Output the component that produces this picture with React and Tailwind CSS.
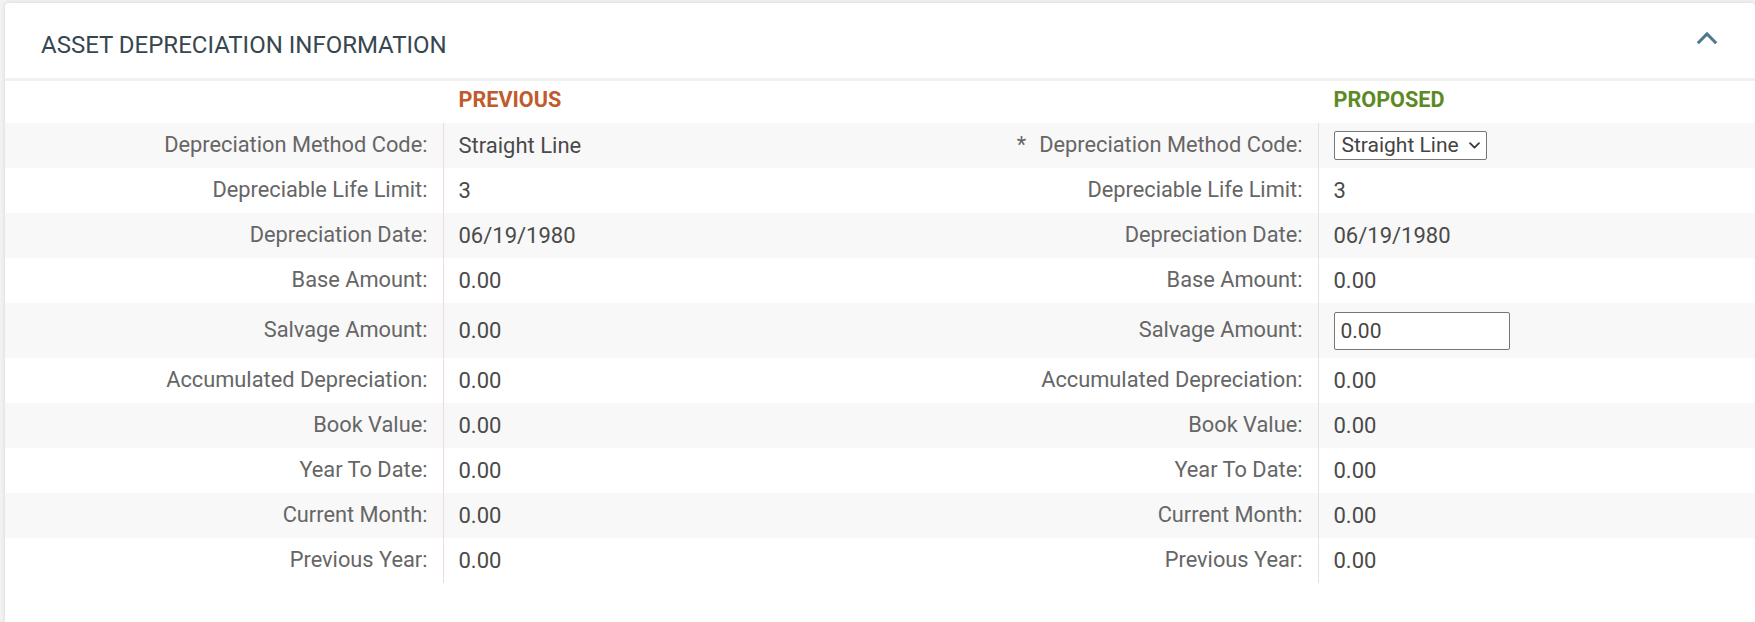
import React from "react";

const rows = [
  { label: "Depreciation Method Code:", prev: "Straight Line", kind: "select" },
  { label: "Depreciable Life Limit:", prev: "3", next: "3" },
  { label: "Depreciation Date:", prev: "06/19/1980", next: "06/19/1980" },
  { label: "Base Amount:", prev: "0.00", next: "0.00" },
  { label: "Salvage Amount:", prev: "0.00", kind: "input" },
  { label: "Accumulated Depreciation:", prev: "0.00", next: "0.00" },
  { label: "Book Value:", prev: "0.00", next: "0.00" },
  { label: "Year To Date:", prev: "0.00", next: "0.00" },
  { label: "Current Month:", prev: "0.00", next: "0.00" },
  { label: "Previous Year:", prev: "0.00", next: "0.00" },
];

function SelectBox() {
  return (
    <div className="relative inline-flex">
      <select
        defaultValue="Straight Line"
        className="appearance-none w-[153px] h-[29px] border border-[#767676] rounded-[2px] bg-white pl-[7px] pr-[24px] py-0 text-[21px] leading-[27px] text-[#444444] outline-none"
        style={{ fontFamily: "Roboto, 'Liberation Sans', sans-serif" }}
      >
        <option>Straight Line</option>
        <option>Declining Balance</option>
      </select>
      <svg
        className="pointer-events-none absolute right-[7px] top-[11px]"
        width="11"
        height="7"
        viewBox="0 0 11 7"
        fill="none"
      >
        <path d="M1 1.2 L5.5 5.7 L10 1.2" stroke="#3a3a3a" strokeWidth="1.7" strokeLinecap="round" strokeLinejoin="round" />
      </svg>
    </div>
  );
}

function InputBox() {
  return (
    <input
      type="text"
      defaultValue="0.00"
      className="w-[176px] h-[38px] border border-[#767676] rounded-[2px] bg-white px-[6px] text-[21px] text-[#444444] outline-none"
      style={{ fontFamily: "Roboto, 'Liberation Sans', sans-serif" }}
    />
  );
}

export default function App() {
  return (
    <div
      className="min-h-screen bg-[#f2f2f2] pt-[3px] pl-[5px] overflow-hidden"
      style={{ fontFamily: "Roboto, 'Liberation Sans', sans-serif" }}
    >
      <div className="w-[1750px] bg-white rounded-[4px] shadow-[0_0_4px_rgba(0,0,0,0.12)] pb-[60px]">
        <div className="flex items-start justify-between h-[78px] pl-[36px] pr-[37px] pt-[28px] border-b-[3px] border-[#f1f1f1]">
          <h2 className="text-[24px] leading-[28px] text-[#37474f] font-normal">
            ASSET DEPRECIATION INFORMATION
          </h2>
          <svg width="22" height="14" viewBox="0 0 22 14" fill="none">
            <path d="M1.8 12.3 L11 3 L20.2 12.3" stroke="#4f7890" strokeWidth="3" />
          </svg>
        </div>

        <div className="grid grid-cols-4 h-[42px] pb-[4px]">
          <div />
          <div className="flex items-center pl-[16px] text-[21.6px] font-bold text-[#bf5b2d]">PREVIOUS</div>
          <div />
          <div className="flex items-center pl-[16px] text-[21.6px] font-bold text-[#5c8a24]">PROPOSED</div>
        </div>

        {rows.map((r, i) => (
          <div
            key={r.label}
            className={`grid grid-cols-4 ${r.kind === "input" ? "h-[55px]" : "h-[45px]"} ${i % 2 === 0 ? "bg-[#f8f8f8]" : "bg-white"}`}
          >
            <div className="flex items-center justify-end pr-[15px] text-[21.8px] text-[#666666] whitespace-nowrap">{r.label}</div>
            <div className="flex items-center pl-[15px] border-l border-[#efdcd5] text-[22px] text-[#4a4a4a]">{r.prev}</div>
            <div className="flex items-center justify-end pr-[15px] text-[21.8px] text-[#666666] whitespace-nowrap">
              {r.kind === "select" && <span className="mr-[13px]">*</span>}
              {r.label}
            </div>
            <div className="flex items-center pl-[15px] border-l border-[#d6e7e7] text-[22px] text-[#4a4a4a]">
              {r.kind === "select" ? <SelectBox /> : r.kind === "input" ? <InputBox /> : r.next}
            </div>
          </div>
        ))}
      </div>
    </div>
  );
}
